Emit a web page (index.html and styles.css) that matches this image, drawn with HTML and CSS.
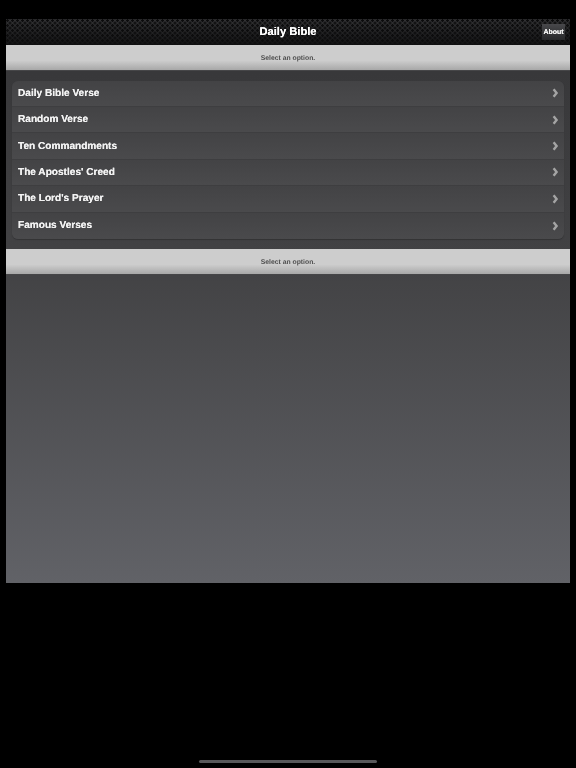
FILE: index.html
```html
<!DOCTYPE html>
<html lang="en">
<head>
<meta charset="utf-8">
<title>Daily Bible</title>
<link rel="stylesheet" href="styles.css">
</head>
<body>
<div class="app">
  <header class="topbar">
    <h1 class="title">Daily Bible</h1>
    <a class="about">About</a>
  </header>
  <div class="status">Select an option.</div>
  <ul class="menu">
    <li class="row"><span>Daily Bible Verse</span><svg class="chev" viewBox="0 0 7 10"><path d="M1.6 1.2 L4.6 5 L1.6 8.8"/></svg></li>
    <li class="row"><span>Random Verse</span><svg class="chev" viewBox="0 0 7 10"><path d="M1.6 1.2 L4.6 5 L1.6 8.8"/></svg></li>
    <li class="row"><span>Ten Commandments</span><svg class="chev" viewBox="0 0 7 10"><path d="M1.6 1.2 L4.6 5 L1.6 8.8"/></svg></li>
    <li class="row"><span>The Apostles' Creed</span><svg class="chev" viewBox="0 0 7 10"><path d="M1.6 1.2 L4.6 5 L1.6 8.8"/></svg></li>
    <li class="row"><span>The Lord's Prayer</span><svg class="chev" viewBox="0 0 7 10"><path d="M1.6 1.2 L4.6 5 L1.6 8.8"/></svg></li>
    <li class="row"><span>Famous Verses</span><svg class="chev" viewBox="0 0 7 10"><path d="M1.6 1.2 L4.6 5 L1.6 8.8"/></svg></li>
  </ul>
  <div class="status">Select an option.</div>
</div>
<div class="home-indicator"></div>
</body>
</html>
```
FILE: styles.css
```css
* { box-sizing: border-box; }
html, body { margin: 0; height: 100%; }
body {
  background: #000;
  font-family: "Liberation Sans", Arial, sans-serif;
  text-rendering: geometricPrecision;
  padding-top: 19px;
  overflow: hidden;
  display: flex;
  flex-direction: column;
  align-items: center;
}
.app {
  width: 564px;
  height: 564px;
  display: flex;
  flex-direction: column;
  background: linear-gradient(#353537 0, #434345 45%, #616267 100%);
  filter: blur(0.25px);
}
.topbar {
  height: 25.6px;
  flex: none;
  display: flex;
  align-items: center;
  justify-content: center;
  position: relative;
  background-color: #1a1a1c;
  background-image:
    radial-gradient(circle at 1.5px 1.5px, #0c0c0d 1.1px, transparent 1.5px),
    radial-gradient(circle at 1.5px 1.5px, #0c0c0d 1.1px, transparent 1.5px),
    linear-gradient(#333335, #131314);
  background-size: 5px 5px, 5px 5px, 100% 100%;
  background-position: 0 0, 2.5px 2.5px, 0 0;
}
.title {
  margin: 0;
  color: #fff;
  font-size: 11.2px;
  font-weight: bold;
  text-shadow: 0 0 0.4px #fff;
}
.about {
  position: absolute;
  right: 5px;
  top: 5px;
  width: 23px;
  height: 16px;
  padding-top: 1px;
  display: flex;
  align-items: center;
  justify-content: center;
  color: #f0f0f0;
  font-size: 7px;
  font-weight: bold;
  text-shadow: 0 0 0.3px #fff;
  background: linear-gradient(#48484b, #27282a);
}
.status {
  height: 26.4px;
  flex: none;
  padding-top: 1.5px;
  display: flex;
  align-items: center;
  justify-content: center;
  color: #4f4f4f;
  font-size: 6.8px;
  font-weight: bold;
  background: linear-gradient(#cdcdcd 0, #cdcdcd 62%, #a8a8a8 100%);
  border-bottom: 1px solid #464648;
}
.menu {
  list-style: none;
  margin: 9.6px 6px 9.8px;
  padding: 0;
  border-radius: 6px;
  overflow: hidden;
  box-shadow: 0 1px 1px #333335;
}
.row {
  height: 26.4px;
  padding: 0 5px 0 6px;
  display: flex;
  align-items: center;
  justify-content: space-between;
  color: #f2f2f2;
  font-size: 10.1px;
  font-weight: bold;
  text-shadow: 0 0 0.4px #f2f2f2;
  background: linear-gradient(#434345, #4a4a4c);
  border-bottom: 1px solid #3e3e40;
}
.row:last-child { border-bottom: 0; }
.chev {
  width: 7px;
  height: 10px;
  fill: none;
  stroke: #a4a4a4;
  stroke-width: 2.4;
}
.home-indicator {
  width: 178px;
  height: 3px;
  margin-top: 177px;
  border-radius: 2px;
  background: #58585a;
}
```
